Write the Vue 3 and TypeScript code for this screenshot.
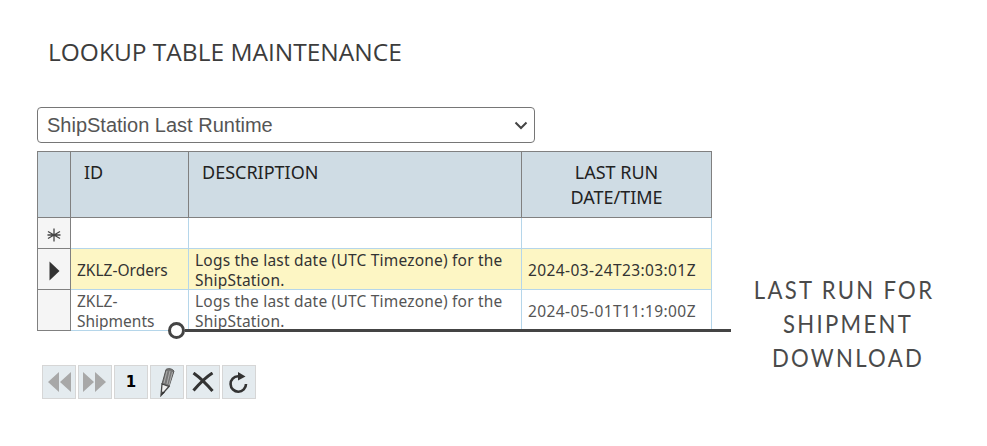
<script setup lang="ts">
interface Row {
  id: string;
  description: string;
  lastRun: string;
  current?: boolean;
}

const rows: Row[] = [
  {
    id: 'ZKLZ-Orders',
    description: 'Logs the last date (UTC Timezone) for the ShipStation.',
    lastRun: '2024-03-24T23:03:01Z',
    current: true,
  },
  {
    id: 'ZKLZ-Shipments',
    description: 'Logs the last date (UTC Timezone) for the ShipStation.',
    lastRun: '2024-05-01T11:19:00Z',
  },
];
</script>

<template>
  <main class="page">
    <h1 class="title">LOOKUP TABLE MAINTENANCE</h1>

    <div class="select">
      <span>ShipStation Last Runtime</span>
      <svg class="chevron" width="14" height="9" viewBox="0 0 14 9">
        <path d="M1.5 1.5 7 7l5.5-5.5" fill="none" stroke="#444" stroke-width="2" />
      </svg>
    </div>

    <table class="grid">
      <colgroup>
        <col style="width: 33px" />
        <col style="width: 118px" />
        <col style="width: 333px" />
        <col style="width: 190px" />
      </colgroup>
      <thead>
        <tr>
          <th></th>
          <th class="pad">ID</th>
          <th class="pad">DESCRIPTION</th>
          <th class="center">LAST RUN<br />DATE/TIME</th>
        </tr>
      </thead>
      <tbody>
        <tr class="new-row">
          <td class="selector">
            <svg width="14" height="14" viewBox="0 0 14 14">
              <path d="M7 0.5v13M1 3.500l12 7M13 3.500l-12 7M0.500 7h13" stroke="#444" stroke-width="1.300" />
            </svg>
          </td>
          <td></td>
          <td></td>
          <td></td>
        </tr>
        <tr v-for="row in rows" :key="row.id" :class="{ current: row.current }">
          <td class="selector">
            <svg v-if="row.current" width="11" height="20" viewBox="0 0 11 20">
              <path d="M0.500 0.500 10.500 10 0.500 19.500z" fill="#333" />
            </svg>
          </td>
          <td><div class="cell">{{ row.id }}</div></td>
          <td class="desc"><div class="cell">{{ row.description }}</div></td>
          <td class="stamp">{{ row.lastRun }}</td>
        </tr>
      </tbody>
    </table>

    <div class="pager">
      <button class="tool" aria-label="Previous">
        <svg width="24" height="20" viewBox="0 0 24 20"><path d="M12 0v20L1 10zM24 0v20L13 10z" fill="#a8a8a8" /></svg>
      </button>
      <button class="tool" aria-label="Next">
        <svg width="24" height="20" viewBox="0 0 24 20"><path d="M0 0v20l11-10zM12 0v20l11-10z" fill="#a8a8a8" /></svg>
      </button>
      <button class="tool page-no">1</button>
      <button class="tool" aria-label="Edit">
        <svg width="20" height="30" viewBox="0 0 20 30">
          <path d="M9 2.500c2-1.500 6-1 8 1.500l-5 15.500-7-2.500z" fill="#777" stroke="#555" />
          <path d="M5 17l7 2.500-8 9z" fill="#eee" stroke="#444" stroke-width="1.300" />
          <path d="M4 28.500l1.500-4 2.500 1z" fill="#333" />
          <path d="M10 4l-3 12M13 4l-3 13M15.500 5l-3.500 13" stroke="#bbb" stroke-width="0.800" />
        </svg>
      </button>
      <button class="tool" aria-label="Cancel">
        <svg width="22" height="20" viewBox="0 0 22 20">
          <path d="M1.500 1c7 5 13 11 19 18M20.500 1C14 5 8 11 1.500 18.500" fill="none" stroke="#333" stroke-width="3" />
        </svg>
      </button>
      <button class="tool" aria-label="Refresh">
        <svg width="20" height="22" viewBox="0 0 20 22">
          <path d="M17 13a7.700 7.700 0 1 1-8-7.700" fill="none" stroke="#333" stroke-width="2.600" />
          <path d="M9 1l7.500 4.500L9 9.500z" fill="#333" />
        </svg>
      </button>
    </div>

    <div class="callout">
      <span class="callout-dot"></span>
      <span class="callout-line"></span>
    </div>
    <p class="note">LAST RUN FOR&nbsp;<br />SHIPMENT<br />DOWNLOAD</p>
  </main>
</template>

<style>
html,
body {
  margin: 0;
  background: #fff;
}
</style>

<style scoped>
.page {
  position: relative;
  width: 987px;
  height: 446px;
  padding: 35px 0 0 37px;
  box-sizing: border-box;
  overflow: hidden;
  font-family: 'Noto Sans', sans-serif;
}

.title {
  margin: 0 0 39px 11px;
  font-family: 'Open Sans', sans-serif;
  font-size: 24.500px;
  line-height: 33px;
  font-weight: 400;
  color: #3c3c3c;
}

.select {
  display: flex;
  align-items: center;
  justify-content: space-between;
  box-sizing: border-box;
  width: 498px;
  height: 36px;
  margin-bottom: 8px;
  padding: 0 6px 0 9px;
  border: 1px solid #767676;
  border-radius: 4px;
  font-family: 'Liberation Sans', sans-serif;
  font-size: 20px;
  color: #555;
}

.grid {
  table-layout: fixed;
  border-collapse: collapse;
  width: 674px;
  font-family: 'Noto Sans', sans-serif;
  font-size: 15.500px;
  line-height: 20px;
  color: #555;
}

th {
  height: 66px;
  padding: 8px 13px 0;
  box-sizing: border-box;
  vertical-align: top;
  text-align: left;
  font-size: 18px;
  line-height: 25px;
  font-weight: 400;
  color: #222;
  background: #cfdce4;
  border: 1px solid #808080;
}

th.center {
  text-align: center;
  padding-left: 0;
  padding-right: 0;
}

td {
  padding: 0 6px;
  box-sizing: border-box;
  height: 41px;
  border: 1px solid #b5d6ea;
  overflow: hidden;
}

.new-row td {
  height: 31px;
}

td.selector {
  padding: 3px 0 0;
  text-align: center;
  background: #f5f5f5;
  border: 1px solid #808080;
  line-height: 0;
}

.cell {
  padding-top: 1px;
  margin-bottom: -1px;
}

td.desc {
  letter-spacing: 0.200px;
}

td.stamp {
  padding-top: 2px;
  letter-spacing: 0.400px;
}

.current td:not(.selector) {
  background: #fdf6c4;
  color: #333;
}

.pager {
  display: flex;
  gap: 2px;
  margin: 34px 0 0 5px;
}

.tool {
  display: flex;
  align-items: center;
  justify-content: center;
  width: 34px;
  height: 34px;
  padding: 0;
  background: #e4ebef;
  border: 1px solid #d6d6d6;
}

.page-no {
  font-family: 'DejaVu Sans', sans-serif;
  font-size: 15px;
  font-weight: 700;
  color: #000;
}

.callout {
  position: absolute;
  left: 168px;
  top: 322px;
  display: flex;
  align-items: center;
}

.callout-dot {
  box-sizing: border-box;
  width: 17px;
  height: 17px;
  border: 3px solid #444;
  border-radius: 50%;
  background: #fff;
}

.callout-line {
  width: 546px;
  height: 3px;
  background: #444;
}

.note {
  position: absolute;
  left: 738px;
  top: 272px;
  width: 220px;
  margin: 0;
  text-align: center;
  font-family: 'Lato', sans-serif;
  font-size: 25px;
  line-height: 34px;
  letter-spacing: 2.600px;
  color: #4a4a4a;
  transform: scaleX(0.885);
}
</style>
